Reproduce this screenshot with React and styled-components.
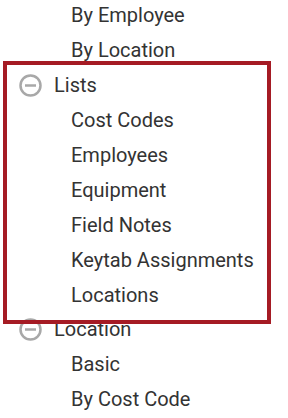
import React from "react";
import styled, { createGlobalStyle } from "styled-components";

const Global = createGlobalStyle`
  html, body { margin: 0; padding: 0; background: #fff; }
  body { font-family: Roboto, "Noto Sans", Arial, sans-serif; overflow: hidden; }
`;

const Tree = styled.div`
  width: 288px;
  height: 418px;
  overflow: hidden;
  display: flex;
  flex-direction: column;
  margin-top: -2px;
`;

const Row = styled.div`
  height: 35px;
  display: flex;
  align-items: center;
  gap: 12px;
  padding-left: ${(p) => (p.$child ? 71 : 19)}px;
  font-size: 20px;
  color: #333;
  white-space: nowrap;
`;

const Group = styled.div`
  position: relative;
  display: flex;
  flex-direction: column;
`;

const Highlight = styled.div`
  position: absolute;
  left: 3px;
  width: 268px;
  top: -6px;
  bottom: -12px;
  border: 4px solid #a51b24;
  box-sizing: border-box;
  pointer-events: none;
  z-index: 1;
`;

const IconSvg = styled.svg`
  flex: none;
  width: 23px;
  height: 23px;
  margin-top: 1px;
`;

const MinusIcon = () => (
  <IconSvg viewBox="0 0 23 23">
    <circle cx="11.5" cy="11.5" r="10" fill="none" stroke="#a8a8a8" strokeWidth="2.5" />
    <line x1="6" y1="11.5" x2="17" y2="11.5" stroke="#a8a8a8" strokeWidth="2.5" />
  </IconSvg>
);

export default function App() {
  return (
    <>
      <Global />
      <Tree>
        <Row $child>By Employee</Row>
        <Row $child>By Location</Row>
        <Group>
          <Highlight />
          <Row><MinusIcon />Lists</Row>
          <Row $child>Cost Codes</Row>
          <Row $child>Employees</Row>
          <Row $child>Equipment</Row>
          <Row $child>Field Notes</Row>
          <Row $child>Keytab Assignments</Row>
          <Row $child>Locations</Row>
        </Group>
        <Row><MinusIcon />Location</Row>
        <Row $child>Basic</Row>
        <Row $child>By Cost Code</Row>
      </Tree>
    </>
  );
}
